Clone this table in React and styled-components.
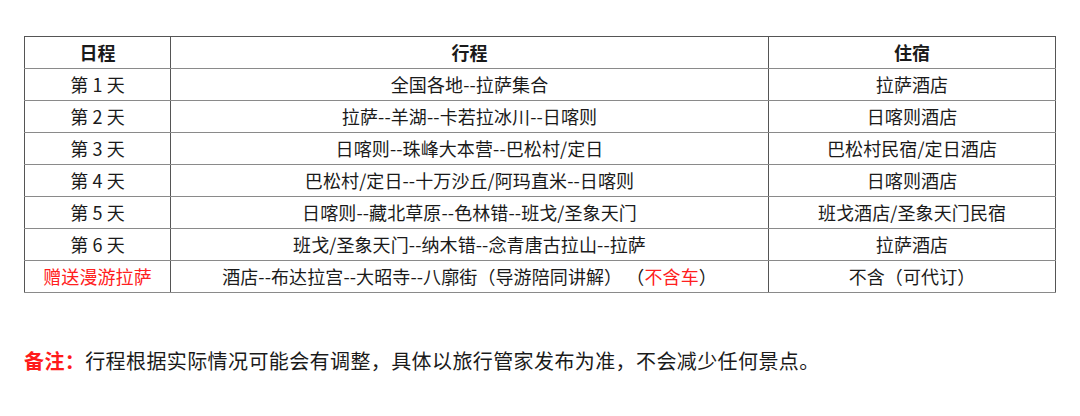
import React from 'react';
import styled, { createGlobalStyle } from 'styled-components';

const GlobalStyle = createGlobalStyle`
  html, body {
    margin: 0;
    padding: 0;
    background: #fff;
  }
  body {
    font-family: "Noto Sans CJK SC", "Noto Sans", sans-serif;
    color: #1a1a1a;
  }
`;

const Page = styled.div`
  width: 1080px;
  height: 416px;
  padding: 36px 25px 0 24px;
  box-sizing: border-box;
`;

const Table = styled.table`
  width: 1031px;
  border-collapse: collapse;
  table-layout: fixed;
  border: 1px solid #555;
`;

const Cell = styled.td`
  height: 31px;
  padding: 0;
  text-align: center;
  font-size: 18px;
  letter-spacing: 0.1px;
  line-height: 31px;
  border-left: 1px solid #555;
  border-right: 1px solid #555;
  border-bottom: 1px solid #8a8a8a;
  white-space: nowrap;
  color: ${({ $red }) => ($red ? '#ff2020' : '#1a1a1a')};
  font-weight: ${({ $head }) => ($head ? 700 : 400)};
`;

const Red = styled.span`
  color: #ff2020;
`;

const Note = styled.p`
  margin: 55px 0 0;
  font-size: 20px;
  letter-spacing: 0.4px;
  line-height: 26px;
  color: #1a1a1a;
`;

const NoteLabel = styled.span`
  color: #ff1a1a;
  font-weight: 700;
`;

const rows = [
  ['第 1 天', '全国各地--拉萨集合', '拉萨酒店'],
  ['第 2 天', '拉萨--羊湖--卡若拉冰川--日喀则', '日喀则酒店'],
  ['第 3 天', '日喀则--珠峰大本营--巴松村/定日', '巴松村民宿/定日酒店'],
  ['第 4 天', '巴松村/定日--十万沙丘/阿玛直米--日喀则', '日喀则酒店'],
  ['第 5 天', '日喀则--藏北草原--色林错--班戈/圣象天门', '班戈酒店/圣象天门民宿'],
  ['第 6 天', '班戈/圣象天门--纳木错--念青唐古拉山--拉萨', '拉萨酒店'],
];

export default function App() {
  return (
    <Page>
      <GlobalStyle />
      <Table>
        <colgroup>
          <col style={{ width: 146 }} />
          <col style={{ width: 598 }} />
          <col style={{ width: 287 }} />
        </colgroup>
        <thead>
          <tr>
            <Cell as="th" $head>日程</Cell>
            <Cell as="th" $head>行程</Cell>
            <Cell as="th" $head>住宿</Cell>
          </tr>
        </thead>
        <tbody>
          {rows.map(([day, route, hotel]) => (
            <tr key={day}>
              <Cell>{day}</Cell>
              <Cell>{route}</Cell>
              <Cell>{hotel}</Cell>
            </tr>
          ))}
          <tr>
            <Cell $red>赠送漫游拉萨</Cell>
            <Cell>
              酒店--布达拉宫--大昭寺--八廓街（导游陪同讲解） （<Red>不含车</Red>）
            </Cell>
            <Cell>不含（可代订）</Cell>
          </tr>
        </tbody>
      </Table>
      <Note>
        <NoteLabel>备注：</NoteLabel>行程根据实际情况可能会有调整，具体以旅行管家发布为准，不会减少任何景点。
      </Note>
    </Page>
  );
}
